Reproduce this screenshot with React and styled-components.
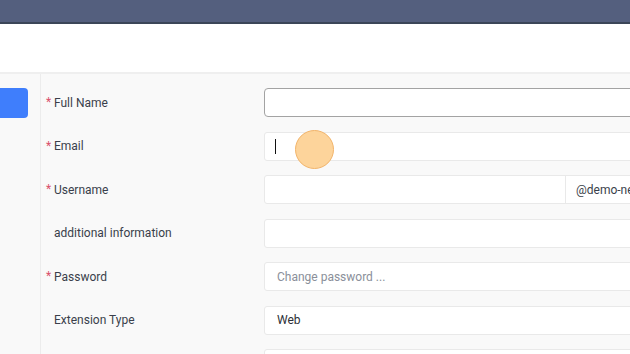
import React from "react"
import styled, { createGlobalStyle } from "styled-components"

const GlobalStyle = createGlobalStyle`
  html, body {
    margin: 0;
    padding: 0;
    background: #f9f9f9;
    font-family: Roboto, "Liberation Sans", sans-serif;
  }
`

const Page = styled.div`
  width: 630px;
  height: 354px;
  overflow: hidden;
`

const TopBar = styled.header`
  height: 22px;
  background: #545f7e;
  border-bottom: 2px solid #3b4658;
`

const SubHeader = styled.div`
  height: 48px;
  background: #ffffff;
  border-bottom: 2px solid #efefef;
`

const Body = styled.div`
  display: flex;
  height: 280px;
`

const Sidebar = styled.aside`
  width: 41px;
  flex-shrink: 0;
  padding-top: 14px;
  border-right: 1px solid #ececec;
  box-sizing: border-box;
`

const SideButton = styled.div`
  width: 36px;
  height: 30px;
  margin-left: -8px;
  background: #3f7efc;
  border-radius: 4px;
`

const Form = styled.form`
  display: grid;
  grid-template-columns: 218px 420px;
  row-gap: 14.5px;
  padding: 14px 0 0 5px;
  align-content: start;
`

const Label = styled.label`
  display: flex;
  align-items: center;
  height: 29px;
  font-size: 12px;
  color: #3a3f4b;
`

const Star = styled.span`
  width: 8px;
  color: #d9506a;
  font-size: 12px;
  align-self: flex-start;
  margin-top: 7px;
`

const Field = styled.div`
  position: relative;
  display: flex;
  height: 29px;
  box-sizing: border-box;
  background: #ffffff;
  border: 1px solid ${p => (p.$focused ? "#a3a3a3" : "#e9e9e9")};
  border-radius: ${p => (p.$focused ? "4px" : "3px")};
  font-size: 12px;
  color: #2c2f36;
`

const Value = styled.span`
  display: flex;
  align-items: center;
  flex: 1;
  padding-left: 12px;
  color: ${p => (p.$placeholder ? "#8a8f9a" : "#2c2f36")};
`

const Addon = styled.span`
  display: flex;
  align-items: center;
  width: 118px;
  box-sizing: border-box;
  padding-left: 10px;
  border-left: 1px solid #e9e9e9;
  color: #3a3f4b;
  white-space: nowrap;
`

const Caret = styled.span`
  width: 1px;
  height: 15px;
  background: #111;
  margin-left: -2px;
`

const Pointer = styled.span`
  position: absolute;
  left: 30px;
  top: -3px;
  width: 37px;
  height: 37px;
  border-radius: 50%;
  background: #fdd49b;
  border: 1px solid #f2b46a;
`

const rows = [
  { label: "Full Name", required: true, focused: true },
  { label: "Email", required: true, caret: true },
  { label: "Username", required: true, addon: "@demo-network" },
  { label: "additional information" },
  { label: "Password", required: true, placeholder: "Change password ..." },
  { label: "Extension Type", value: "Web" },
  { label: "" },
]

const App = () => {
  return (
    <Page>
      <GlobalStyle />
      <TopBar />
      <SubHeader />
      <Body>
        <Sidebar>
          <SideButton />
        </Sidebar>
        <Form>
          {rows.map((r, i) => (
            <React.Fragment key={i}>
              <Label>
                <Star>{r.required ? "*" : ""}</Star>
                {r.label}
              </Label>
              <Field $focused={r.focused}>
                <Value $placeholder={!!r.placeholder}>
                  {r.caret && <Caret />}
                  {r.placeholder || r.value}
                </Value>
                {r.addon && <Addon>{r.addon}</Addon>}
                {r.caret && <Pointer />}
              </Field>
            </React.Fragment>
          ))}
        </Form>
      </Body>
    </Page>
  )
}

export default App
